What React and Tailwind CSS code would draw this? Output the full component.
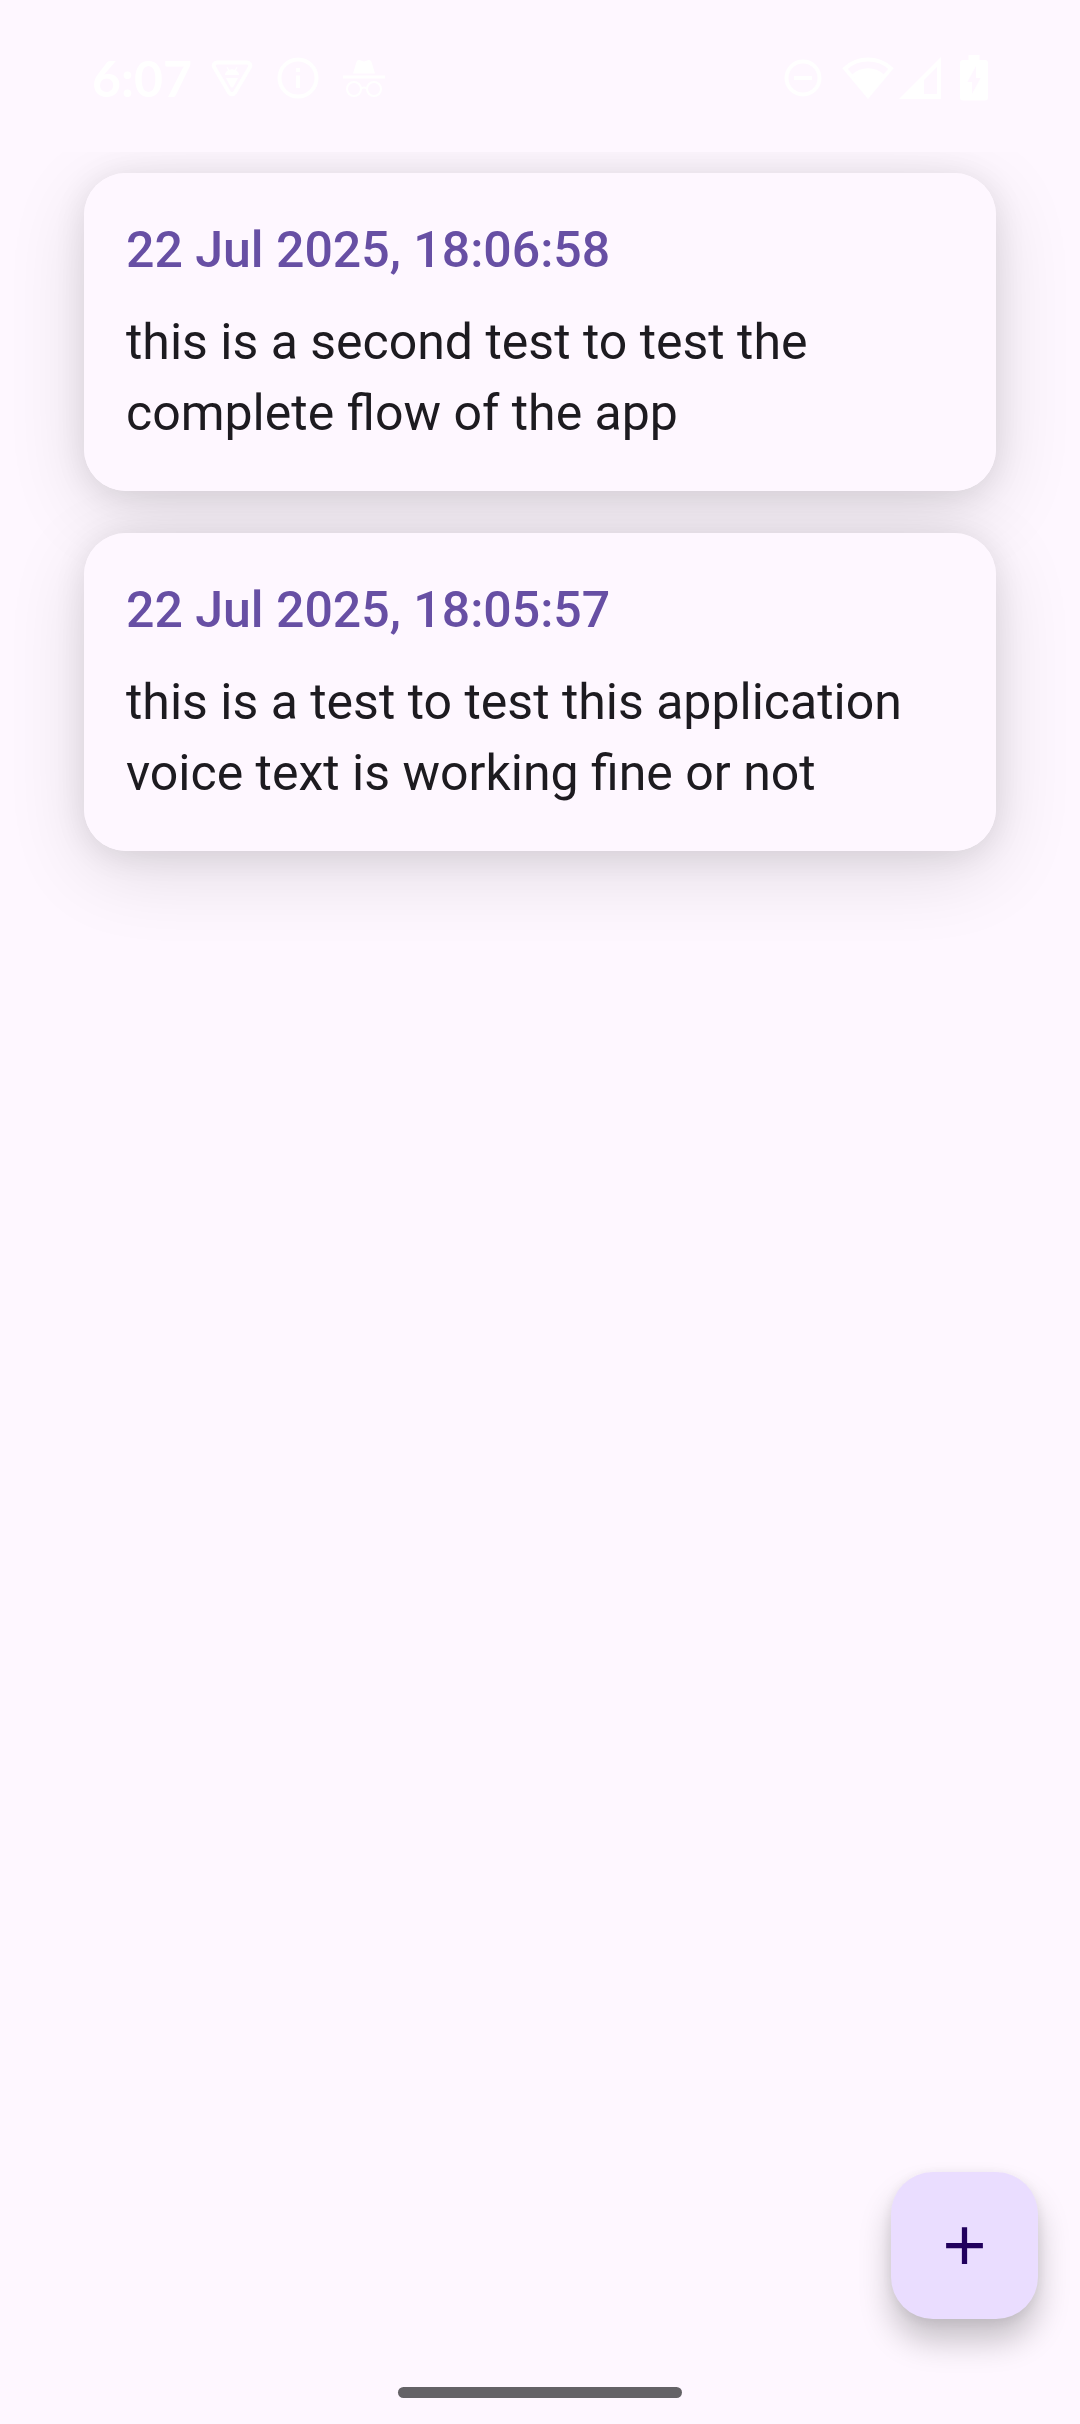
const notes = [
  {
    id: 2,
    time: "22 Jul 2025, 18:06:58",
    text: "this is a second test to test the complete flow of the app",
  },
  {
    id: 1,
    time: "22 Jul 2025, 18:05:57",
    text: "this is a test to test this application voice text is working fine or not",
  },
];

function StatusBar() {
  return (
    <header className="flex h-[152px] shrink-0 items-center justify-between px-[92px] pt-1 text-white">
      <div className="flex items-center">
        <span className="w-[119px] font-['Lato',sans-serif] text-[50px] leading-[50px] font-bold">6:07</span>
        {/* Debugging badge */}
        <svg className="h-[40px] w-[42px]" viewBox="0 0 42 40" fill="none" aria-hidden="true">
          <path d="M6 4.500h30c2.600 0 4 2.600 2.800 4.800L24 34.500c-1.400 2.400-4.600 2.400-6 0L3.200 9.300C2 7.100 3.400 4.500 6 4.500Z" stroke="currentColor" strokeWidth="4" strokeLinejoin="round" />
          <path d="M14 17c0-2 1.200-3.800 3-4.800L15.500 9.600l1-.6 1.700 2.700a8.500 8.500 0 0 1 5.600 0L25.500 9l1 .6-1.500 2.600c1.800 1 3 2.800 3 4.800Z" fill="currentColor" />
          <path d="M15 20h12l-4.500 8.500a1.700 1.700 0 0 1-3 0Z" fill="currentColor" />
        </svg>
        <svg className="ml-6 h-[42px] w-[42px]" viewBox="0 0 42 42" fill="none" aria-hidden="true">
          <circle cx="21" cy="21" r="18.500" stroke="currentColor" strokeWidth="4" />
          <path d="M19 18.500h4V31h-4ZM19 11h4v4h-4Z" fill="currentColor" />
        </svg>
        {/* Private browsing */}
        <svg className="ml-6 h-[40px] w-[42px]" viewBox="0 0 42 40" fill="none" aria-hidden="true">
          <path d="M10 15.500 13.500 4c.5-1.600 2-2.300 3.500-1.800l4 1.300 4-1.300c1.500-.5 3 .2 3.500 1.800L32 15.500Z" fill="currentColor" />
          <path d="M0 17.500h42v3H0Z" fill="currentColor" />
          <circle cx="11" cy="31" r="7" stroke="currentColor" strokeWidth="2" />
          <circle cx="31" cy="31" r="7" stroke="currentColor" strokeWidth="2" />
          <path d="M18 31c1.500-2 4.500-2 6 0" stroke="currentColor" strokeWidth="2" />
        </svg>
      </div>
      <div className="flex items-center">
        <svg className="h-[38px] w-[38px]" viewBox="0 0 38 38" fill="none" aria-hidden="true">
          <circle cx="19" cy="19" r="16.500" stroke="currentColor" strokeWidth="4" />
          <path d="M10 17h18v4H10Z" fill="currentColor" />
        </svg>
        <svg className="ml-5 h-[44px] w-[52px]" viewBox="0 0 52 44" fill="none" aria-hidden="true">
          <path d="M3 12.500C16 .5 36 .5 49 12.500L26 40Z" stroke="currentColor" strokeWidth="4" />
          <path d="M10 18.500c9-8.500 23-8.500 32 0L26 43Z" fill="currentColor" />
        </svg>
        <svg className="ml-1 h-[44px] w-[44px]" viewBox="0 0 44 44" aria-hidden="true">
          <path fillRule="evenodd" d="M43 1v42H1ZM39 11 26 24v14h13Z" fill="currentColor" />
        </svg>
        <svg className="ml-[18px] h-[46px] w-[28px]" viewBox="0 0 28 46" aria-hidden="true">
          <path fillRule="evenodd" d="M8.500 0h11v5H25a3 3 0 0 1 3 3v34.500a3 3 0 0 1-3 3H3a3 3 0 0 1-3-3V8a3 3 0 0 1 3-3h5.500ZM16 11 7.500 27H12v12l8.500-16H16Z" fill="currentColor" />
        </svg>
      </div>
    </header>
  );
}

function NoteCard({ note }) {
  return (
    <li className="relative before:absolute before:inset-0 before:-z-10 before:rounded-[42px] before:shadow-[0_20px_80px_rgba(0,0,0,0.12),0_4px_32px_rgba(0,0,0,0.09)]">
      <article className="flex flex-col gap-[21px] rounded-[42px] bg-[#fef7ff] p-[42px] text-[50px] leading-[71px]">
        <h2 className="font-medium text-[#674fa4]">{note.time}</h2>
        <p className="text-[#1d1b20]">{note.text}</p>
      </article>
    </li>
  );
}

export default function App() {
  return (
    <div className="flex h-screen flex-col bg-[#fef7ff] font-['Roboto',sans-serif]">
      <StatusBar />
      <main className="flex-1 overflow-x-hidden overflow-y-auto">
        <ul className="isolate flex flex-col gap-[42px] px-[84px] pt-[21px] pb-[126px]">
          {notes.map((note) => (
            <NoteCard key={note.id} note={note} />
          ))}
        </ul>
      </main>
      <button
        type="button"
        aria-label="Add note"
        className="fixed right-[42px] bottom-[105px] grid size-[147px] place-items-center rounded-[42px] bg-[#eaddff] text-[#21005d] shadow-[0_22px_32px_rgba(0,0,0,0.22),0_2px_14px_rgba(0,0,0,0.08)]"
      >
        <svg className="size-[63px]" viewBox="0 0 24 24" fill="currentColor" aria-hidden="true">
          <path d="M19 13h-6v6h-2v-6H5v-2h6V5h2v6h6Z" />
        </svg>
      </button>
      <footer className="flex h-[63px] shrink-0 items-center justify-center">
        <div className="h-[11px] w-[284px] rounded-full bg-[#646266]" />
      </footer>
    </div>
  );
}
